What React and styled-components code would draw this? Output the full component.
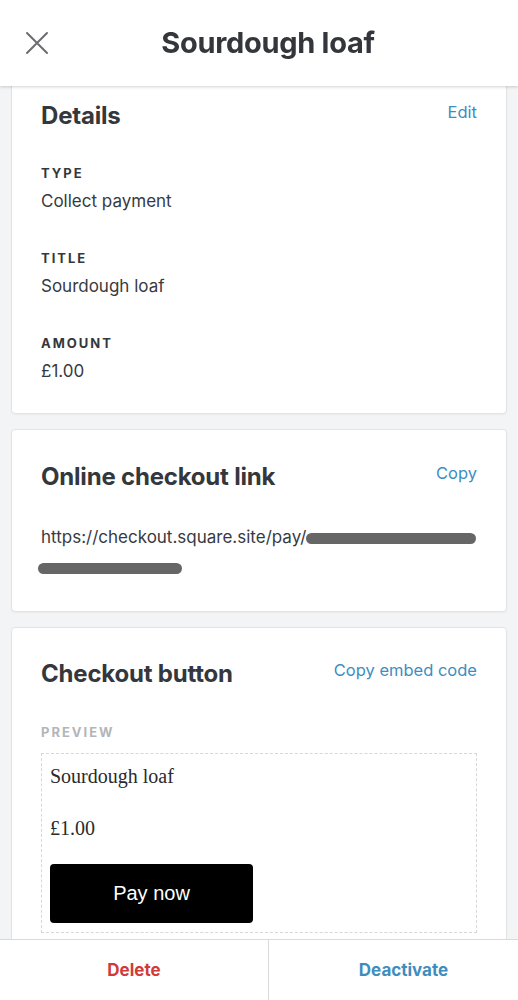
import React from "react";
import styled, { createGlobalStyle } from "styled-components";

const GlobalStyle = createGlobalStyle`
    html, body {
        margin: 0;
        padding: 0;
        background: #f3f4f6;
        font-family: Inter, "Noto Sans", "Liberation Sans", sans-serif;
        color: #373a3f;
    }
`;

const Header = styled.header`
    position: fixed;
    top: 0;
    left: 0;
    right: 0;
    height: 86px;
    background: #ffffff;
    box-shadow: 0 1px 3px rgba(0, 0, 0, 0.18);
    display: flex;
    align-items: center;
    justify-content: center;
    z-index: 2;
`;

const CloseButton = styled.button`
    position: absolute;
    left: 24px;
    top: 30px;
    width: 26px;
    height: 26px;
    padding: 0;
    border: none;
    background: none;
    display: flex;
    align-items: center;
    justify-content: center;
`;

const HeaderTitle = styled.h1`
    margin: 0 0 0 18px;
    font-size: 29px;
    line-height: 36px;
    font-weight: 700;
    color: #33363b;
    letter-spacing: -0.3px;
`;

const Content = styled.main`
    display: flex;
    flex-direction: column;
    gap: 15px;
    padding: 74px 11px 80px;
`;

const Card = styled.section`
    background: #ffffff;
    border: 1px solid #e2e3e5;
    border-radius: 4px;
    padding: ${(p) => p.$pad || "30px 29px 30px"};
    box-shadow: 0 1px 2px rgba(0, 0, 0, 0.04);
`;

const CardHead = styled.div`
    display: flex;
    justify-content: space-between;
    align-items: flex-start;
    margin-bottom: ${(p) => p.$gap || "28px"};
`;

const CardTitle = styled.h2`
    margin: 0;
    font-size: 24px;
    line-height: 30px;
    font-weight: 700;
    color: #34373c;
    letter-spacing: -0.2px;
`;

const LinkAction = styled.a`
    font-size: 16.5px;
    line-height: 22px;
    color: #3e8dbf;
    text-decoration: none;
    cursor: pointer;
`;

const Field = styled.div`
    display: flex;
    flex-direction: column;
    gap: 9px;
    & + & {
        margin-top: 38px;
    }
`;

const Label = styled.div`
    font-size: 13px;
    font-weight: 700;
    letter-spacing: 2px;
    line-height: 16px;
    color: ${(p) => (p.$muted ? "#b3b5b8" : "#34373c")};
    text-transform: uppercase;
`;

const Value = styled.div`
    font-size: 17px;
    line-height: 22px;
    color: #373a3f;
`;

const Url = styled.div`
    font-size: 17px;
    line-height: 30px;
    color: #373a3f;
    white-space: nowrap;
`;

const Redacted = styled.span`
    display: inline-block;
    vertical-align: middle;
    width: ${(p) => p.$w}px;
    height: 11px;
    border-radius: 6px;
    background: #666666;
    margin-left: ${(p) => p.$ml || 0}px;
`;

const Preview = styled.div`
    margin-top: 13px;
    border: 1px dashed #d6d7d9;
    padding: 8px 8px 6px;
    height: 164px;
    font-family: "Liberation Serif", "DejaVu Serif", serif;
    color: #2a2a2a;
`;

const PreviewTitle = styled.div`
    font-size: 20px;
    line-height: 28px;
`;

const PreviewPrice = styled.div`
    font-size: 20px;
    line-height: 28px;
    margin-top: 24px;
`;

const PayButton = styled.button`
    margin-top: 22px;
    width: 203px;
    height: 59px;
    background: #000000;
    color: #ffffff;
    border: none;
    border-radius: 4px;
    font-family: "Liberation Sans", Arial, sans-serif;
    font-size: 20px;
`;

const Footer = styled.footer`
    position: fixed;
    left: 0;
    right: 0;
    bottom: 0;
    height: 60px;
    background: #ffffff;
    border-top: 1px solid #d9dadc;
    display: grid;
    grid-template-columns: 268px 1fr;
    z-index: 2;
`;

const FooterButton = styled.button`
    border: none;
    background: #ffffff;
    border-left: ${(p) => (p.$divider ? "1px solid #d9dadc" : "none")};
    padding: ${(p) => (p.$divider ? "0 0 0 20px" : "0")};
    font-family: Inter, "Noto Sans", "Liberation Sans", sans-serif;
    font-size: 17px;
    font-weight: 700;
    color: ${(p) => (p.$danger ? "#cf3b3b" : "#3e8dbf")};
`;

const CloseIcon = () => (
    <svg width="24" height="24" viewBox="0 0 24 24">
        <path
            d="M2 2 L22 22 M22 2 L2 22"
            stroke="#6b6d70"
            strokeWidth="2"
            strokeLinecap="round"
            fill="none"
        />
    </svg>
);

const details = [
    { label: "Type", value: "Collect payment" },
    { label: "Title", value: "Sourdough loaf" },
    { label: "Amount", value: "£1.00" },
];

export default function App() {
    return (
        <>
            <GlobalStyle />
            <Header>
                <CloseButton aria-label="Close">
                    <CloseIcon />
                </CloseButton>
                <HeaderTitle>Sourdough loaf</HeaderTitle>
            </Header>
            <Content>
                <Card $pad="26px 29px 31px">
                    <CardHead $gap="34px">
                        <CardTitle>Details</CardTitle>
                        <LinkAction>Edit</LinkAction>
                    </CardHead>
                    {details.map((d) => (
                        <Field key={d.label}>
                            <Label>{d.label}</Label>
                            <Value>{d.value}</Value>
                        </Field>
                    ))}
                </Card>
                <Card $pad="32px 29px 29px">
                    <CardHead $gap="30px">
                        <CardTitle>Online checkout link</CardTitle>
                        <LinkAction>Copy</LinkAction>
                    </CardHead>
                    <Url>
                        https://checkout.square.site/pay/
                        <Redacted $w={170} />
                        <br />
                        <Redacted $w={144} $ml={-3} />
                    </Url>
                </Card>
                <Card $pad="31px 29px 30px">
                    <CardHead $gap="35px">
                        <CardTitle>Checkout button</CardTitle>
                        <LinkAction>Copy embed code</LinkAction>
                    </CardHead>
                    <Label $muted>Preview</Label>
                    <Preview>
                        <PreviewTitle>Sourdough loaf</PreviewTitle>
                        <PreviewPrice>£1.00</PreviewPrice>
                        <PayButton>Pay now</PayButton>
                    </Preview>
                </Card>
            </Content>
            <Footer>
                <FooterButton $danger>Delete</FooterButton>
                <FooterButton $divider>Deactivate</FooterButton>
            </Footer>
        </>
    );
}
